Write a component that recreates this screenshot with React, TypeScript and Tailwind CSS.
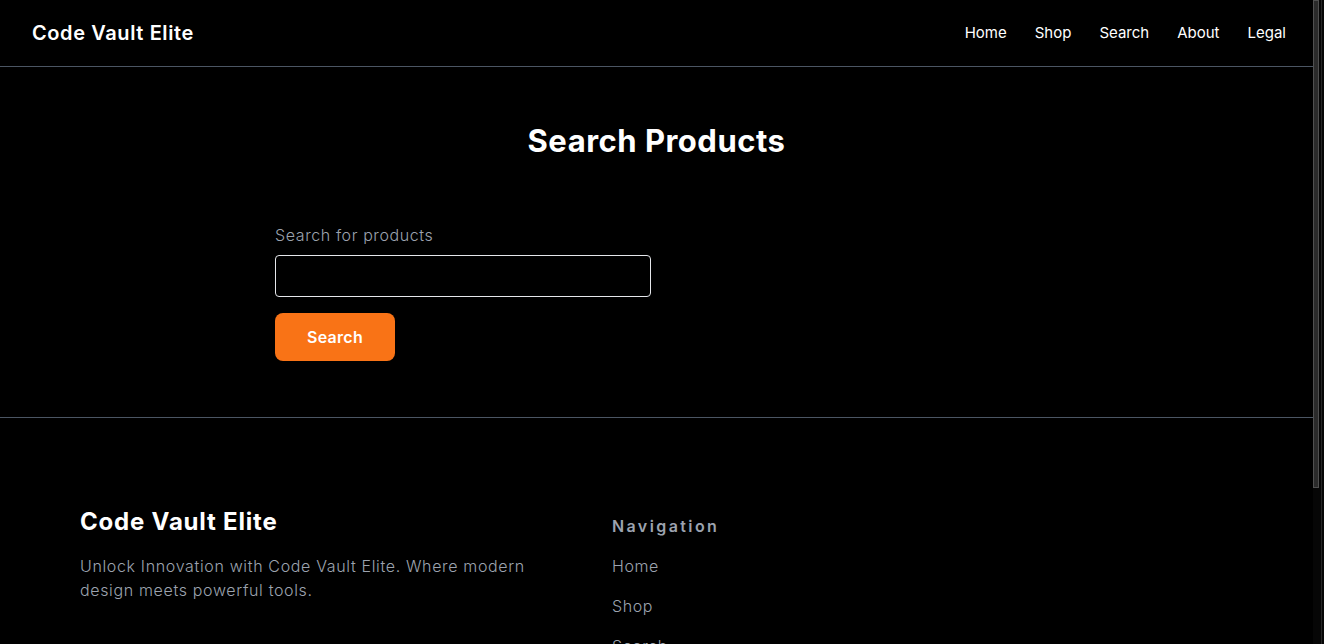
import React, { useState } from "react";

const navLinks = ["Home", "Shop", "Search", "About", "Legal"];

const Header = () => (
  <header className="flex h-[67px] items-center justify-between border-b border-[#4b5563] pl-8 pr-[27px]">
    <a href="#" className="text-[20px] font-semibold tracking-[0.6px] text-white">
      Code Vault Elite
    </a>
    <nav className="flex items-center gap-[28px]">
      {navLinks.map((link) => (
        <a key={link} href="#" className="text-[15px] font-normal text-white">
          {link}
        </a>
      ))}
    </nav>
  </header>
);

const SearchSection = () => {
  const [query, setQuery] = useState("");

  return (
    <main className="border-b border-[#4b5563] py-14">
      <h1 className="text-center text-[31px] font-bold leading-9 tracking-[0.5px] text-white">
        Search Products
      </h1>
      <form
        className="mx-auto mt-16 max-w-[763px]"
        onSubmit={(event) => event.preventDefault()}
      >
        <label
          htmlFor="search"
          className="mb-2 block text-[16px] font-light leading-6 tracking-[0.6px] text-[#9ca3af]"
        >
          Search for products
        </label>
        <input
          id="search"
          type="text"
          value={query}
          onChange={(event) => setQuery(event.target.value)}
          className="block h-[42px] w-[376px] rounded border border-gray-200 bg-black px-3 text-white outline-none"
        />
        <button
          type="submit"
          className="mt-4 h-12 w-[120px] rounded-lg bg-[#f97316] text-[16px] font-semibold tracking-[0.3px] text-white"
        >
          Search
        </button>
      </form>
    </main>
  );
};

const Footer = () => (
  <footer className="px-20 pb-[113px] pt-[88px]">
    <div className="flex gap-[84px]">
      <div className="w-[448px]">
        <h2 className="text-[24px] font-bold leading-8 tracking-[0.8px] text-white">
          Code Vault Elite
        </h2>
        <p className="mt-4 text-[16px] font-light leading-6 tracking-[0.65px] text-[#9ca3af]">
          Unlock Innovation with Code Vault Elite. Where modern design meets
          powerful tools.
        </p>
      </div>
      <div className="pt-2">
        <h3 className="text-[16px] font-semibold leading-6 tracking-[2.4px] text-[#9ca3af]">
          Navigation
        </h3>
        <ul className="mt-4 space-y-4">
          {navLinks.map((link) => (
            <li key={link}>
              <a href="#" className="text-[16px] font-light leading-6 tracking-[0.6px] text-[#9ca3af]">
                {link}
              </a>
            </li>
          ))}
        </ul>
      </div>
    </div>
  </footer>
);

// drawn stand-in for the browser's dark scrollbar seen in the screenshot
const ScrollBar = () => (
  <div className="flex h-screen w-[11px] shrink-0 bg-[#060606]">
    <div className="h-[488px] w-[6px] border border-[#505050] bg-[#2b2b2b]" />
    <div className="ml-[2px] h-full w-px bg-[#262626]" />
  </div>
);

export default function App() {
  return (
    <div className="flex h-screen bg-black font-['Inter',sans-serif]">
      <div className="min-w-0 flex-1 overflow-y-auto [scrollbar-width:none]">
        <Header />
        <SearchSection />
        <Footer />
      </div>
      <ScrollBar />
    </div>
  );
}
